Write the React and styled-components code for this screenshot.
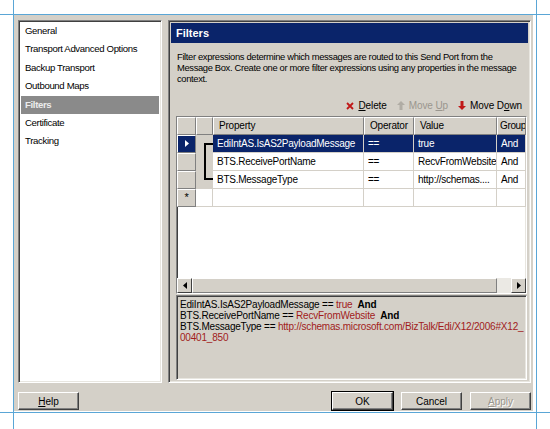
import React from "react"
import styled, { createGlobalStyle } from "styled-components"

const Global = createGlobalStyle`
  html, body {
    margin: 0;
    padding: 0;
    background: #fff;
    width: 550px;
    height: 429px;
    overflow: hidden;
  }
  body {
    font-family: "Liberation Sans", Arial, sans-serif;
    font-size: 10px;
    color: #000;
  }
`

const Page = styled.div`
  position: relative;
  width: 550px;
  height: 429px;
  padding: 15px 0 0 14px;
  box-sizing: border-box;
`

const Guide = styled.div`
  position: absolute;
  background: #5aa6d6;
  ${(p) =>
    p.$v
      ? `top: 0; bottom: 0; width: 1px; left: ${p.$at}px;`
      : `left: 0; right: 0; height: 1px; top: ${p.$at}px;`}
`

const Dialog = styled.div`
  width: 519px;
  height: 396px;
  background: #d4d0c8;
  box-sizing: border-box;
  padding: 5px 2px 0 4px;
  display: flex;
  flex-direction: column;
`

const Body = styled.div`
  display: flex;
  gap: 6px;
  height: 363px;
`

const Sunken = styled.div`
  box-sizing: border-box;
  border-top: 1px solid #808080;
  border-left: 1px solid #808080;
  border-right: 1px solid #fff;
  border-bottom: 1px solid #fff;
  box-shadow: inset 1px 1px 0 #404040, inset -1px -1px 0 #e8e6e0;
`

const NavList = styled(Sunken)`
  width: 144px;
  flex-shrink: 0;
  background: #fff;
  padding: 1px 2px;
  display: flex;
  flex-direction: column;
`

const NavItem = styled.div`
  height: 18.4px;
  line-height: 18.4px;
  padding-left: 4px;
  font-size: 9.6px;
  letter-spacing: -0.35px;
  white-space: nowrap;
  background: ${(p) => (p.$active ? "#8a8a8a" : "transparent")};
  color: ${(p) => (p.$active ? "#ececec" : "#000")};
  font-weight: ${(p) => (p.$active ? "bold" : "normal")};
`

const Panel = styled(Sunken)`
  flex: 1;
  min-width: 0;
  overflow: hidden;
  padding: 2px 2px;
  display: flex;
  flex-direction: column;
`

const TitleBar = styled.div`
  height: 20px;
  background: #0a246a;
  color: #fff;
  font-weight: bold;
  font-size: 11px;
  line-height: 20px;
  padding-left: 5px;
  flex-shrink: 0;
`

const Description = styled.p`
  margin: 8px 4px 0 6px;
  line-height: 11px;
  font-size: 9.4px;
  letter-spacing: -0.35px;
  white-space: nowrap;
`

const Toolbar = styled.div`
  display: flex;
  justify-content: flex-end;
  align-items: center;
  gap: 10px;
  margin: 15px 6px 0 0;
  height: 14px;
`

const ToolButton = styled.span`
  display: inline-flex;
  align-items: center;
  gap: 4px;
  color: ${(p) => (p.$disabled ? "#9a968e" : "#000")};
  letter-spacing: -0.1px;
  u {
    text-decoration: underline;
  }
`

const GridBox = styled(Sunken)`
  margin: 3px 1px 0 5px;
  height: 179px;
  background: #fff;
  display: flex;
  flex-direction: column;
  overflow: hidden;
`

const Rows = styled.div`
  flex: 1;
  display: grid;
  grid-template-columns: 19px 17px 151px 50px 83px 1fr;
  grid-auto-rows: 18px;
  align-content: start;
`

const Cell = styled.div`
  box-sizing: border-box;
  position: relative;
  padding-left: 4px;
  line-height: 17px;
  white-space: nowrap;
  overflow: hidden;
  letter-spacing: -0.25px;
  border-right: 1px solid #d4d0c8;
  border-bottom: 1px solid #d4d0c8;
  background: ${(p) => (p.$selected ? "#0a246a" : "#fff")};
  color: ${(p) => (p.$selected ? "#fff" : "#000")};
`

const HeadCell = styled.div`
  box-sizing: border-box;
  background: #d4d0c8;
  border-top: 1px solid #fff;
  border-left: 1px solid #fff;
  border-right: 1px solid #808080;
  border-bottom: 1px solid #808080;
  padding-left: ${(p) => (p.$tight ? "2px" : "5px")};
  line-height: 16px;
  white-space: nowrap;
  overflow: hidden;
  letter-spacing: ${(p) => (p.$tight ? "-0.35px" : "-0.2px")};
`

const RowHead = styled(HeadCell)`
  padding: 0;
  display: flex;
  align-items: center;
  justify-content: center;
  background: ${(p) => (p.$selected ? "#0a246a" : "#d4d0c8")};
  color: ${(p) => (p.$selected ? "#fff" : "#000")};
`

const NewRowMark = styled.span`
  font-size: 11px;
  line-height: 11px;
`

const GroupCell = styled.div`
  position: relative;
  background: ${(p) => (p.$empty ? "#fff" : "#d4d0c8")};
  border-bottom: ${(p) => (p.$empty ? "1px solid #d4d0c8" : "none")};
  border-right: 1px solid #d4d0c8;
  box-sizing: border-box;
`

const Bracket = styled.div`
  position: absolute;
  left: 8px;
  right: -1px;
  border-left: 2px solid #000;
  top: ${(p) => (p.$part === "start" ? "8px" : "0")};
  bottom: ${(p) => (p.$part === "end" ? "9px" : "0")};
  border-top: ${(p) => (p.$part === "start" ? "2px solid #000" : "none")};
  border-bottom: ${(p) => (p.$part === "end" ? "2px solid #000" : "none")};
`

const ScrollBar = styled.div`
  height: 15px;
  flex-shrink: 0;
  display: flex;
  background: #ebe9e4;
`

const ScrollBtn = styled.div`
  width: 15px;
  box-sizing: border-box;
  background: #d4d0c8;
  border-top: 1px solid #fff;
  border-left: 1px solid #fff;
  border-right: 1px solid #404040;
  border-bottom: 1px solid #404040;
  display: flex;
  align-items: center;
  justify-content: center;
`

const Thumb = styled.div`
  box-sizing: border-box;
  background: #d4d0c8;
  border-top: 1px solid #fff;
  border-left: 1px solid #fff;
  border-right: 1px solid #808080;
  border-bottom: 1px solid #808080;
  flex: 1;
`

const Track = styled.div`
  width: 14px;
`

const ExprBox = styled(Sunken)`
  margin: 1px 1px 0 5px;
  height: 86px;
  padding: 3px 3px;
  line-height: 11px;
  font-size: 10px;
  letter-spacing: -0.2px;
  white-space: nowrap;
`

const Red = styled.span`
  color: #a11b1b;
`

const Op = styled.b`
  font-weight: bold;
`

const Footer = styled.div`
  display: flex;
  align-items: center;
  margin-top: 9px;
  gap: 8px;
`

const Button = styled.button`
  width: 61px;
  height: 18px;
  box-sizing: border-box;
  font-family: "Liberation Sans", Arial, sans-serif;
  font-size: 10px;
  padding: 0;
  background: #d4d0c8;
  color: ${(p) => (p.$disabled ? "#9a968e" : "#000")};
  text-shadow: ${(p) => (p.$disabled ? "1px 1px 0 #fff" : "none")};
  border-top: 1px solid #fff;
  border-left: 1px solid #fff;
  border-right: 1px solid #404040;
  border-bottom: 1px solid #404040;
  box-shadow: ${(p) =>
    p.$default
      ? "0 0 0 1px #000, inset -1px -1px 0 #808080"
      : "inset -1px -1px 0 #808080"};
  margin-left: ${(p) => (p.$push ? "auto" : "0")};
`

const navItems = [
  "General",
  "Transport Advanced Options",
  "Backup Transport",
  "Outbound Maps",
  "Filters",
  "Certificate",
  "Tracking",
]

const rows = [
  { prop: "EdiIntAS.IsAS2PayloadMessage", op: "==", value: "true", group: "And", bracket: "start" },
  { prop: "BTS.ReceivePortName", op: "==", value: "RecvFromWebsite", group: "And", bracket: "mid" },
  { prop: "BTS.MessageType", op: "==", value: "http://schemas....", group: "And", bracket: "end" },
]

const DeleteIcon = () => (
  <svg width="8" height="8" viewBox="0 0 8 8">
    <path d="M1 1L7 7M7 1L1 7" stroke="#c01818" strokeWidth="1.8" />
  </svg>
)

const UpIcon = () => (
  <svg width="8" height="9" viewBox="0 0 8 9">
    <path d="M4 0L8 4H5.5V9H2.5V4H0Z" fill="#b0aca4" />
  </svg>
)

const DownIcon = () => (
  <svg width="8" height="9" viewBox="0 0 8 9">
    <path d="M4 9L8 5H5.5V0H2.5V5H0Z" fill="#c01818" />
  </svg>
)

const Arrow = ({ dir }) => (
  <svg width="4" height="7" viewBox="0 0 4 7">
    <path d={dir === "left" ? "M4 0V7L0 3.5Z" : "M0 0V7L4 3.5Z"} fill="#000" />
  </svg>
)

const Selector = () => (
  <svg width="4" height="7" viewBox="0 0 4 7">
    <path d="M0 0V7L4 3.5Z" fill="#fff" />
  </svg>
)

export default function App() {
  return (
    <Page>
      <Global />
      <Guide $at={14} />
      <Guide $at={412} />
      <Guide $v $at={13} />
      <Guide $v $at={536} />
      <Dialog>
        <Body>
          <NavList>
            {navItems.map((item) => (
              <NavItem key={item} $active={item === "Filters"}>
                {item}
              </NavItem>
            ))}
          </NavList>
          <Panel>
            <TitleBar>Filters</TitleBar>
            <Description>
              Filter expressions determine which messages are routed to this Send Port from the
              <br />
              Message Box. Create one or more filter expressions using any properties in the message
              <br />
              context.
            </Description>
            <Toolbar>
              <ToolButton>
                <DeleteIcon />
                <span>
                  <u>D</u>elete
                </span>
              </ToolButton>
              <ToolButton $disabled>
                <UpIcon />
                <span>
                  Move <u>U</u>p
                </span>
              </ToolButton>
              <ToolButton>
                <DownIcon />
                <span>
                  Move D<u>o</u>wn
                </span>
              </ToolButton>
            </Toolbar>
            <GridBox>
              <Rows>
                <HeadCell />
                <HeadCell />
                <HeadCell>Property</HeadCell>
                <HeadCell>Operator</HeadCell>
                <HeadCell>Value</HeadCell>
                <HeadCell $tight>Group</HeadCell>
                {rows.map((r, i) => (
                  <React.Fragment key={r.prop}>
                    <RowHead $selected={i === 0}>{i === 0 && <Selector />}</RowHead>
                    <GroupCell>
                      <Bracket $part={r.bracket} />
                    </GroupCell>
                    <Cell $selected={i === 0}>{r.prop}</Cell>
                    <Cell $selected={i === 0}>{r.op}</Cell>
                    <Cell $selected={i === 0}>{r.value}</Cell>
                    <Cell $selected={i === 0}>{r.group}</Cell>
                  </React.Fragment>
                ))}
                <RowHead>
                  <NewRowMark>*</NewRowMark>
                </RowHead>
                <GroupCell $empty />
                <Cell />
                <Cell />
                <Cell />
                <Cell />
              </Rows>
              <ScrollBar>
                <ScrollBtn>
                  <Arrow dir="left" />
                </ScrollBtn>
                <Thumb />
                <Track />
                <ScrollBtn>
                  <Arrow dir="right" />
                </ScrollBtn>
              </ScrollBar>
            </GridBox>
            <ExprBox>
              EdiIntAS.IsAS2PayloadMessage == <Red>true</Red>&nbsp; <Op>And</Op>
              <br />
              BTS.ReceivePortName == <Red>RecvFromWebsite</Red>&nbsp; <Op>And</Op>
              <br />
              BTS.MessageType == <Red>http://schemas.microsoft.com/BizTalk/Edi/X12/2006#X12_</Red>
              <br />
              <Red>00401_850</Red>
            </ExprBox>
          </Panel>
        </Body>
        <Footer>
          <Button>
            <u>H</u>elp
          </Button>
          <Button $default $push>
            OK
          </Button>
          <Button>Cancel</Button>
          <Button $disabled>
            <u>A</u>pply
          </Button>
        </Footer>
      </Dialog>
    </Page>
  )
}
